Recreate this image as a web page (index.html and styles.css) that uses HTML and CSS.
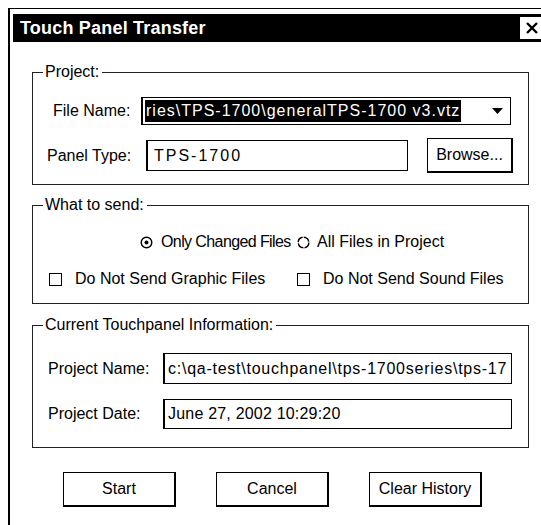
FILE: index.html
```html
<!DOCTYPE html>
<html lang="en">
<head>
<meta charset="utf-8">
<title>Touch Panel Transfer</title>
<link rel="stylesheet" href="styles.css">
</head>
<body>
<div class="window">
  <div class="titlebar">
    <span class="title">Touch Panel Transfer</span>
    <span class="close">
      <svg width="14" height="12" viewBox="0 0 14 12"><path d="M2 1 L12 11 M12 1 L2 11" stroke="#000" stroke-width="2.4" fill="none"/></svg>
    </span>
  </div>

  <fieldset class="group group-project">
    <legend>Project:</legend>
    <div class="row row-file">
      <span class="lbl lbl-file">File Name:</span>
      <div class="combo">
        <span class="sel">ries\TPS-1700\generalTPS-1700 v3.vtz</span>
        <svg class="arrow" width="11" height="6" viewBox="0 0 11 6"><path d="M0 0 H11 L5.5 6 Z" fill="#000"/></svg>
      </div>
    </div>
    <div class="row row-panel">
      <span class="lbl lbl-panel">Panel Type:</span>
      <div class="field field-panel">TPS-1700</div>
      <button class="btn btn-browse">Browse...</button>
    </div>
  </fieldset>

  <fieldset class="group group-send">
    <legend>What to send:</legend>
    <div class="row row-radio">
      <span class="opt opt-changed">
        <svg class="radio" width="13" height="13" viewBox="0 0 13 13"><circle cx="6.5" cy="6.5" r="5.3" stroke="#000" stroke-width="1.4" fill="#fff"/><circle cx="6.5" cy="6.5" r="2" fill="#000"/></svg>
        <span class="opt-text-tight">Only Changed Files</span>
      </span>
      <span class="opt opt-all">
        <svg class="radio" width="13" height="13" viewBox="0 0 13 13"><circle cx="6.5" cy="6.5" r="5.3" stroke="#000" stroke-width="1.4" fill="#fff" stroke-dasharray="7 1.2"/></svg>
        <span>All Files in Project</span>
      </span>
    </div>
    <div class="row row-check">
      <span class="opt opt-graphic"><span class="check"></span><span>Do Not Send Graphic Files</span></span>
      <span class="opt opt-sound"><span class="check"></span><span>Do Not Send Sound Files</span></span>
    </div>
  </fieldset>

  <fieldset class="group group-info">
    <legend>Current Touchpanel Information:</legend>
    <div class="row row-info">
      <span class="lbl lbl-info">Project Name:</span>
      <div class="field field-info">c:\qa-test\touchpanel\tps-1700series\tps-17</div>
    </div>
    <div class="row row-info row-date">
      <span class="lbl lbl-info">Project Date:</span>
      <div class="field field-info field-date">June 27, 2002 10:29:20</div>
    </div>
  </fieldset>

  <div class="actions">
    <button class="btn btn-main">Start</button>
    <button class="btn btn-main">Cancel</button>
    <button class="btn btn-main">Clear History</button>
  </div>
</div>
</body>
</html>
```

FILE: styles.css
```css
html, body {
  margin: 0;
  padding: 0;
  background: #fff;
  overflow: hidden;
}

body {
  width: 541px;
  height: 525px;
  font-family: "Liberation Sans", Arial, sans-serif;
  font-size: 16px;
  color: #000;
}

/* dialog frame, running off the right and bottom edges */
.window {
  margin: 8px 0 0 8px;
  width: 540px;
  height: 540px;
  border-top: 1px solid #000;
  border-left: 2px solid #000;
  box-sizing: border-box;
}

.titlebar {
  margin: 5px 4px 0 3px;
  height: 28px;
  background: #000;
  color: #fff;
  display: flex;
  align-items: center;
  justify-content: space-between;
}

.title {
  font-weight: bold;
  font-size: 18px;
  padding-left: 7px;
  letter-spacing: 0.2px;
}

.close {
  width: 24px;
  height: 22px;
  background: #fff;
  display: flex;
  align-items: center;
  justify-content: center;
}

/* group boxes */
.group {
  margin: 0 0 0 22px;
  width: 497px;
  box-sizing: border-box;
  border: 1px solid #222;
  padding: 0;
  min-inline-size: 0;
}

.group legend {
  margin-left: 10px;
  padding: 0 3px 0 2px;
  line-height: 18px;
  height: 18px;
}

.group-project { margin-top: 21px; padding-top: 16px; padding-bottom: 11px; }
.group-send    { margin-top: 11px; padding-top: 18px; padding-bottom: 14px; }
.group-info    { margin-top: 12px; padding-top: 19px; padding-bottom: 18px; }

.row {
  display: flex;
  align-items: center;
}

.lbl { flex: none; white-space: nowrap; }

/* project rows */
.row-file { padding-left: 20px; height: 28px; }
.lbl-file { width: 88px; }

.combo {
  width: 370px;
  height: 28px;
  box-sizing: border-box;
  border: 1px solid #000;
  border-left-width: 2px;
  display: flex;
  align-items: center;
  padding-left: 2px;
  overflow: hidden;
}

.sel {
  background: #000;
  color: #fff;
  line-height: 22px;
  padding: 0 1px;
  white-space: nowrap;
  letter-spacing: 1px;
}

.arrow { margin-left: auto; margin-right: 7px; flex: none; }

.row-panel { padding-left: 14px; margin-top: 13px; height: 35px; }
.lbl-panel { width: 99px; }

.field {
  height: 31px;
  box-sizing: border-box;
  border: 1px solid #000;
  border-left-width: 2px;
  display: flex;
  align-items: center;
  white-space: nowrap;
  overflow: hidden;
}

.field-panel { width: 262px; padding-left: 6px; letter-spacing: 2px; }

.btn {
  font: inherit;
  color: #000;
  background: #fff;
  border: 1px solid #000;
  border-right-width: 2px;
  border-bottom-width: 2px;
  border-radius: 0;
  padding: 0;
  height: 35px;
  box-sizing: border-box;
}

.btn-browse { width: 86px; margin-left: 19px; }

/* options */
.opt {
  display: flex;
  align-items: center;
  flex: none;
  white-space: nowrap;
}

.radio { flex: none; }

.row-radio { padding-left: 107px; height: 20px; }
.opt-changed { width: 157px; gap: 8px; }
.opt-text-tight { letter-spacing: -0.6px; }
.opt-all { gap: 7px; }

.row-check { padding-left: 16px; height: 20px; margin-top: 17px; }
.opt-graphic { width: 248px; gap: 13px; }
.opt-sound { gap: 13px; }

.check {
  width: 13px;
  height: 13px;
  box-sizing: border-box;
  border: 1.5px solid #000;
  flex: none;
}

/* touchpanel info rows */
.row-info { padding-left: 15px; }
.row-date { margin-top: 15px; }
.lbl-info { width: 115px; }
.field-info { width: 349px; padding-left: 3px; letter-spacing: 0.75px; }
.field-date { height: 30px; letter-spacing: 0.2px; }

/* bottom buttons */
.actions {
  display: flex;
  gap: 40px;
  margin-top: 24px;
  padding-left: 53px;
}

.btn-main { width: 113px; }
```
